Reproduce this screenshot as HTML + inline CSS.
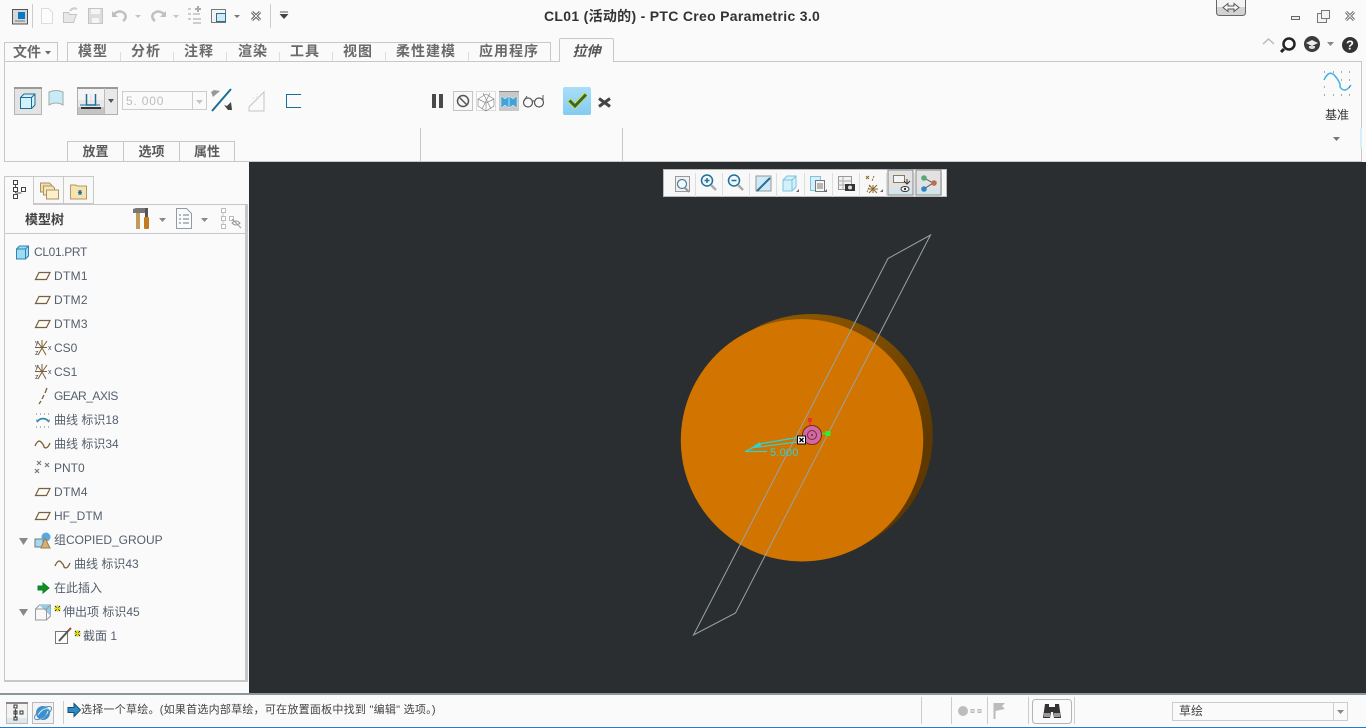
<!DOCTYPE html>
<html><head><meta charset="utf-8"><style>
html,body{margin:0;padding:0;background:#fafafa}
#p{position:relative;width:1366px;height:728px;overflow:hidden;background:#fafafa;font-family:"Liberation Sans","Noto Sans CJK SC",sans-serif;color:#4a4a4a}
.a{position:absolute}
.tab{position:absolute;top:42px;height:19px;line-height:19px;font-size:14px;letter-spacing:1px;font-weight:bold;color:#6a6a6a;text-align:center;white-space:nowrap}
.sub{position:absolute;top:142px;height:19px;line-height:19px;font-size:13px;font-weight:bold;color:#5a5a5a;text-align:center;white-space:nowrap}
.sep{position:absolute;background:#c8c8c8}
.row{position:absolute;font-size:12px;line-height:16px;color:#55606c;white-space:nowrap}
svg{position:absolute;overflow:visible}
</style></head><body><div id="p">

<!-- quick access toolbar -->
<svg style="left:0;top:0" width="300" height="36" fill="none">
<rect x="12.500" y="9.500" width="15" height="14.500" fill="#d8d8d8" stroke="#555"/><rect x="18" y="12" width="7" height="7" fill="#0a78c8"/><path d="M15 21h10" stroke="#777"/>
<line x1="32.500" y1="4" x2="32.500" y2="28" stroke="#ccc"/>
<path d="M41.500 8.500h7l4 4v11h-11z" stroke="#ddd" fill="#fdfdfd"/>
<path d="M63.500 22.500v-10h5l1 2h7l-3 8z" stroke="#c4c4c4" fill="#e8e8e8"/><path d="M70 11q3-4 7-2" stroke="#ccc" stroke-width="2"/>
<path d="M88.500 8.500h14v15h-14z" stroke="#c4c4c4" fill="#ddd"/><rect x="91" y="9" width="9" height="5" fill="#f5f5f5"/><rect x="92" y="18" width="7" height="5" fill="#f5f5f5"/>
<path d="M114 14q6-5 11 0q2 4-2 7" stroke="#c0c0c0" stroke-width="2.500"/><path d="M112 11v6h6z" fill="#c0c0c0"/>
<path d="M135 15h6l-3 3z" fill="#c4c4c4"/>
<path d="M164 14q-6-5-11 0q-2 4 2 7" stroke="#c0c0c0" stroke-width="2.500"/><path d="M166 11v6h-6z" fill="#c0c0c0"/>
<path d="M173 15h6l-3 3z" fill="#c4c4c4"/>
<path d="M188 9h3M188 14h3M188 19h3M193 14h7M193 19h8M193 23h8" stroke="#c0c0c0" stroke-width="1.500"/><path d="M195 9h6M198 6v6" stroke="#aaa" stroke-width="2"/>
<rect x="211.500" y="9.500" width="14" height="13" fill="#f4f4f4" stroke="#777"/><rect x="216.500" y="13.500" width="9" height="8" fill="#cfe9f5" stroke="#2a6f96"/>
<path d="M234 15h6l-3 3z" fill="#777"/>
<path d="M252 12l8 8M260 12l-8 8" stroke="#555" stroke-width="3"/><path d="M252 12l8 8M260 12l-8 8" stroke="#eee" stroke-width="1"/>
<line x1="270.500" y1="4" x2="270.500" y2="28" stroke="#ccc"/>
<path d="M280 12h8" stroke="#555"/><path d="M279.500 14h9l-4.500 5z" fill="#444"/>
</svg>
<div class="a" style="left:544px;top:8px;font-size:14px;letter-spacing:.3px;line-height:17px;font-weight:bold;color:#333;white-space:nowrap">CL01 (活动的) - PTC Creo Parametric 3.0</div>

<!-- window controls -->
<svg style="left:1200px;top:0" width="166" height="60" fill="none">
<path d="M16.500 0v12q0 3.500 3 3.500h23q3 0 3-3.500V0" fill="#d2d2d2" stroke="#666"/><rect x="17" y="0" width="28" height="7" fill="#f4f4f4"/>
<path d="M23 7.500l5-4v2.500h6v-2.500l5 4-5 4v-2.500h-6v2.500z" fill="#f8f8f8" stroke="#555"/>
<rect x="91.500" y="16.500" width="8" height="3" stroke="#666" fill="#eee"/>
<rect x="117.500" y="13.500" width="9" height="9" stroke="#777" fill="#f3f3f3"/><rect x="121.500" y="10.500" width="8" height="8" stroke="#777" fill="#f3f3f3"/>
<path d="M146 12l8 8M154 12l-8 8" stroke="#666" stroke-width="3"/><path d="M146 12l8 8M154 12l-8 8" stroke="#eee" stroke-width="1"/>
<path d="M63 44l5.500-5 5.500 5" stroke="#bbb" stroke-width="1.500"/>
<circle cx="89" cy="44" r="5.500" stroke="#222" stroke-width="2.500"/><path d="M84 49l-3 3" stroke="#222" stroke-width="3"/>
<circle cx="112" cy="44" r="8" fill="#3c3c3c"/><path d="M106 43l6-3 6 3-6 3z" fill="#eee"/><path d="M109 46v2q3 2 6 0v-2" fill="#ddd"/>
<path d="M127 42h7l-3.500 4z" fill="#888"/>
<circle cx="150" cy="45" r="8" fill="#333"/><text x="150" y="49.500" font-size="13" font-weight="bold" fill="#fff" text-anchor="middle" font-family="Liberation Sans">?</text>
</svg>

<!-- Tabs -->
<div class="a" style="left:4px;top:42px;width:54px;height:19px;border:1px solid #c8c8c8;border-bottom:0;box-sizing:border-box"></div>
<div class="a" style="left:67px;top:42px;width:484px;height:19px;border:1px solid #c8c8c8;border-bottom:0;box-sizing:border-box"></div>
<div class="a" style="left:13px;top:43px;font-size:14px;line-height:18px;font-weight:bold;color:#6a6a6a;white-space:nowrap">文件</div>
<svg style="left:45px;top:51px" width="6" height="4"><path d="M0 0h6l-3 3.500z" fill="#666"/></svg>
<div class="tab" style="left:77px;width:32px">模型</div>
<div class="tab" style="left:130px;width:32px">分析</div>
<div class="tab" style="left:183px;width:32px">注释</div>
<div class="tab" style="left:237px;width:32px">渲染</div>
<div class="tab" style="left:289px;width:32px">工具</div>
<div class="tab" style="left:342px;width:32px">视图</div>
<div class="tab" style="left:395px;width:62px">柔性建模</div>
<div class="tab" style="left:478px;width:62px">应用程序</div>
<div class="sep" style="left:120px;top:52px;width:1px;height:9px;background:#ddd"></div>
<div class="sep" style="left:173px;top:52px;width:1px;height:9px;background:#ddd"></div>
<div class="sep" style="left:226px;top:52px;width:1px;height:9px;background:#ddd"></div>
<div class="sep" style="left:279px;top:52px;width:1px;height:9px;background:#ddd"></div>
<div class="sep" style="left:332px;top:52px;width:1px;height:9px;background:#ddd"></div>
<div class="sep" style="left:385px;top:52px;width:1px;height:9px;background:#ddd"></div>
<div class="sep" style="left:468px;top:52px;width:1px;height:9px;background:#ddd"></div>
<!-- ribbon frame -->
<div class="a" style="left:4px;top:61px;width:1358px;height:101px;border:1px solid #c8c8c8;box-sizing:border-box;background:#fafafa"></div>
<div class="a" style="left:559px;top:38px;width:55px;height:24px;border:1px solid #c8c8c8;border-bottom:0;box-sizing:border-box;background:#fafafa;border-radius:2px 2px 0 0;text-align:center;font-size:14px;line-height:24px;font-weight:bold;font-style:italic;color:#555">拉伸</div>

<!-- ribbon left icons -->
<svg style="left:0;top:80px" width="320" height="40" fill="none">
<rect x="14.500" y="7.500" width="27" height="27" fill="#e3e3e3" stroke="#b5b5b5"/><rect x="14" y="7" width="28" height="2" fill="#9a9a9a"/>
<path d="M20.500 17.500l3.500-3.500h11v11l-3.500 3.500h-11z" fill="#d3f0fb" stroke="#1b6f94"/><path d="M20.500 17.500h11v11M31.500 17.500l3.500-3.500" stroke="#1b6f94"/>
<path d="M49 12q7-3 14 0v13q-7-4-14 0z" fill="#c6ecf8" stroke="#a7a7a7"/>
<rect x="77.500" y="7.500" width="40" height="27" fill="#e8e8e8" stroke="#b0b0b0"/><rect x="77" y="7" width="41" height="2" fill="#999"/>
<rect x="78" y="9" width="26" height="11" fill="#f4f4f4"/><rect x="78" y="27" width="26" height="7" fill="#c4c4c4"/>
<line x1="104.500" y1="8" x2="104.500" y2="34" stroke="#bbb"/>
<path d="M80 25h20" stroke="#1b6f94"/><path d="M86.500 14v11h9V14" stroke="#1b6f94" stroke-width="1.500"/><path d="M91 14v8" stroke="#ddd"/><path d="M81 28h20" stroke="#333" stroke-width="2"/>
<path d="M108 19h6l-3 4z" fill="#555"/>
<rect x="122.500" y="11.500" width="84" height="18" fill="#fafafa" stroke="#ccc"/><line x1="192.500" y1="12" x2="192.500" y2="29" stroke="#ccc"/>
<path d="M196 20h7l-3.500 4z" fill="#c4c4c4"/>
<text x="126" y="25" font-size="12" fill="#bdbdbd" font-family="Liberation Sans" letter-spacing="0.800">5. 000</text>
<path d="M212 31l19-22" stroke="#1b6f94" stroke-width="2"/><path d="M211 12l3-2 6 1-7 6z" fill="#999"/><path d="M232 30l-1-8-4 4-3-1 4 5z" fill="#444"/>
<path d="M249 27l15-15v19h-15z" stroke="#c4c4c4"/><path d="M252 18h8M257 14v6" stroke="#ddd" stroke-dasharray="1 1"/>
<path d="M301 14.500h-14.500v13H301" stroke="#1b6f94"/>
</svg>

<svg style="left:420px;top:85px" width="200" height="34" fill="none">
<defs><linearGradient id="okg" x1="0" y1="0" x2="0" y2="1"><stop offset="0" stop-color="#a9def9"/><stop offset="1" stop-color="#83cbf2"/></linearGradient></defs>
<rect x="12" y="9" width="4" height="14" fill="#4a4a4a"/><rect x="19" y="9" width="4" height="14" fill="#4a4a4a"/>
<rect x="33.500" y="6.500" width="19" height="19" fill="#f8f8f8" stroke="#c4c4c4"/><circle cx="43" cy="16" r="5.500" stroke="#555" stroke-width="1.500"/><path d="M39 12l8 8" stroke="#555" stroke-width="1.500"/>
<rect x="56.500" y="6.500" width="19" height="19" fill="#fdfdfd" stroke="#ddd"/><path d="M58 14l8-5 8 5v7l-8 5-8-5zM58 14l8 4 8-4M66 18v8M63 8l8 16M70 8l-8 16" stroke="#888" stroke-width="0.700"/>
<rect x="79" y="6" width="20" height="20" fill="#c8c8c8"/><rect x="79" y="6" width="20" height="1" fill="#888"/><path d="M81 11l4 3 4-3v12l-4-3-4 3zM89 11l4 3 4-3v12l-4-3-4 3z" fill="#3ea3d8" stroke="#eee" stroke-width="0.500"/>
<circle cx="108" cy="17.500" r="4.500" stroke="#555" stroke-width="1.200"/><circle cx="119" cy="17.500" r="4.500" stroke="#555" stroke-width="1.200"/><path d="M112 16h3M104 16l3-5M123 16v-6" stroke="#555"/>
<rect x="143" y="2" width="28" height="28" rx="2" fill="url(#okg)"/>
<path d="M149 15l6 6 11-12" stroke="#d8d84a" stroke-width="5"/><path d="M149.500 15.500l5.500 5.500 11-11.500" stroke="#2f6a34" stroke-width="3"/>
<path d="M179 13.500l11 8M190 13.500l-11 8" stroke="#444" stroke-width="3"/>
</svg>
<div class="sep" style="left:420px;top:128px;width:1px;height:33px"></div>
<div class="sep" style="left:622px;top:128px;width:1px;height:33px"></div>

<!-- sub tabs -->
<div class="a" style="left:67px;top:141px;width:168px;height:20px;border:1px solid #c8c8c8;border-bottom:0;box-sizing:border-box"></div>
<div class="sep" style="left:123px;top:141px;width:1px;height:20px"></div>
<div class="sep" style="left:179px;top:141px;width:1px;height:20px"></div>
<div class="sub" style="left:68px;width:55px">放置</div>
<div class="sub" style="left:124px;width:55px">选项</div>
<div class="sub" style="left:180px;width:54px">属性</div>

<!-- datum -->
<svg style="left:1320px;top:68px" width="36" height="34" fill="none">
<path d="M4 12q5-11 11-4t5 11q5 7 11-2" stroke="#3fb4e0" stroke-width="1.500"/>
<path d="M4 4h1M13 4h1M21 4h1M29 4h1M4 19h1M4 27h1M13 27h1M21 27h1M29 27h1M21 12h1M29 12h1M29 19h1" stroke="#555"/>
</svg>
<div class="a" style="left:1325px;top:107px;font-size:12px;line-height:17px;color:#333;white-space:nowrap">基准</div>
<svg style="left:1333px;top:137px" width="8" height="5"><path d="M0 0h7l-3.500 4z" fill="#777"/></svg>
<div class="a" style="left:1360px;top:128px;width:2px;height:20px;background:#d6eef7"></div>

<!-- Viewport -->
<div class="a" style="left:249px;top:162px;width:1117px;height:531px;background:#2a2e30"></div>
<div class="a" style="left:0;top:162px;width:249px;height:531px;background:#fafafa"></div>

<svg style="left:0;top:0" width="1366" height="728" fill="none">
<defs><linearGradient id="bk" x1="0.400" y1="0" x2="1" y2="0.500"><stop offset="0" stop-color="#8c5800"/><stop offset="0.500" stop-color="#7a4a00"/><stop offset="1" stop-color="#5e3800"/></linearGradient></defs>
<circle cx="811.700" cy="435" r="121" fill="url(#bk)"/>
<circle cx="802" cy="440.300" r="121.200" fill="#d17400"/>
<path d="M888 258.500L930.500 235L735.500 613L693.500 635Z" stroke="#9aa2a6" stroke-width="1"/>
<path d="M745 451.500L762 443.500L797 437.500M751 448L797 442M745 451.500H767" stroke="#2fd3d6" stroke-width="1.200"/>
<path d="M752 447l8-5 1 4z" fill="#2fd3d6"/>
<text x="770" y="456" font-size="11" fill="#2fd3d6" font-family="Liberation Sans" letter-spacing="0.200">5.000</text>
<circle cx="812" cy="435" r="9.500" fill="#cf6aa6" stroke="#7d2a10" stroke-width="1"/>
<circle cx="812" cy="435" r="4.500" stroke="#7d2a30" stroke-width="1"/><circle cx="812" cy="435" r="1" fill="#7d2a30"/>
<path d="M810 418v7" stroke="#f03030" stroke-width="1.500"/><rect x="808" y="418" width="4" height="4" fill="#f03030"/>
<path d="M822 433.500h5" stroke="#30ee30" stroke-width="1.500"/><rect x="825.500" y="431" width="5" height="5" fill="#30ee30"/>
<rect x="797.500" y="436" width="8" height="8" fill="#fff" stroke="#000"/><path d="M799.500 438l4 4M803.500 438l-4 4" stroke="#000" stroke-width="1.400"/>
</svg>

<!-- view toolbar -->
<div class="a" style="left:663px;top:169px;width:284px;height:28px;background:#f8f8f8;border:1px solid #bbb;box-sizing:border-box"></div>
<svg style="left:660px;top:165px" width="290" height="35" fill="none">
<path d="M35.500 8v24M62.500 8v24M89.500 8v24M116.500 8v24M144.500 8v24M172.500 8v24M199.500 8v24M226.500 8v24M254.500 8v24M281.500 8v24" stroke="#ddd"/>
<rect x="15.500" y="11.500" width="14" height="15" fill="#f0f0f0" stroke="#999"/><circle cx="22" cy="19" r="4.500" fill="#f5fbff" stroke="#4a7f9a" stroke-width="1.200"/><path d="M25 23l4 4" stroke="#999" stroke-width="2"/>
<circle cx="47" cy="15.500" r="5.500" fill="#f0f8ff" stroke="#1f6f98" stroke-width="1.500"/><path d="M44.500 15.500h5M47 13v5" stroke="#1f6f98" stroke-width="1.500"/><path d="M51 20l5 5" stroke="#aaa" stroke-width="2.500"/>
<circle cx="74" cy="15.500" r="5.500" fill="#f0f8ff" stroke="#1f6f98" stroke-width="1.500"/><path d="M71.500 15.500h5" stroke="#1f6f98" stroke-width="1.500"/><path d="M78 20l5 5" stroke="#aaa" stroke-width="2.500"/>
<rect x="96" y="11" width="15" height="15" fill="#cfe9f6" stroke="#999"/><path d="M97 26l13-13" stroke="#1f6f98" stroke-width="2"/>
<path d="M123 15l4-4h9v11l-4 4h-9z" fill="#d3f0fb" stroke="#7cc3de"/><path d="M123 15h9v11M132 15l4-4" stroke="#7cc3de"/><path d="M139 24v3h-3z" fill="#666"/>
<rect x="150.500" y="11.500" width="10" height="14" fill="#d3f0fb" stroke="#7cc3de"/><rect x="155.500" y="15.500" width="9" height="11" fill="#f5f5f5" stroke="#777"/><path d="M157 19h6M157 21h6M157 23h6" stroke="#777"/><path d="M167 24v3h-3z" fill="#666"/>
<rect x="178.500" y="11.500" width="13" height="13" fill="#f2f2f2" stroke="#999"/><path d="M178 16h13M178 20h13M183 12v12" stroke="#aaa"/><rect x="185" y="19" width="10" height="7" fill="#333"/><circle cx="190" cy="22.500" r="2" fill="#ddd"/>
<path d="M206 11l3 3M209 11l-3 3M213 20v8M208 24h10M209 20l8 8M217 20l-8 8" stroke="#8a6a2a"/><path d="M214 11l-2 5M210 20l-3 7" stroke="#8a6a2a" stroke-dasharray="2 1"/><path d="M223 24v3h-3z" fill="#666"/>
<rect x="228" y="5" width="25" height="25" fill="#e2e2e2" stroke="#888"/><rect x="229" y="24" width="23" height="5" fill="#d2e5ec"/>
<rect x="233.500" y="10.500" width="11" height="7" fill="#f4f4f4" stroke="#8a7a5a"/><path d="M247 14v5M244 16l3 3 3-3" stroke="#333"/><ellipse cx="245" cy="24" rx="4" ry="2.500" fill="#fff" stroke="#333"/><circle cx="245" cy="24" r="1.200" fill="#333"/>
<rect x="256" y="5" width="25" height="25" fill="#e2e2e2" stroke="#888"/><rect x="257" y="24" width="23" height="5" fill="#d2e5ec"/>
<path d="M264 13l9 5-9 6" stroke="#555"/><circle cx="264" cy="13" r="2.800" fill="#58a878"/><circle cx="274" cy="18" r="2.800" fill="#c06a50"/><circle cx="264" cy="24" r="2.800" fill="#2f86c6"/>
</svg>

<!-- Left panel -->
<div class="a" style="left:4px;top:204px;width:244px;height:478px;border:1px solid #c8c8c8;border-right:3px solid #c8c8c8;border-bottom:2px solid #c8c8c8;box-sizing:border-box;background:#fafafa"></div>
<div class="a" style="left:4px;top:176px;width:30px;height:29px;border:1px solid #c8c8c8;border-bottom:0;box-sizing:border-box;background:#fafafa"></div>
<div class="a" style="left:34px;top:176px;width:30px;height:28px;border:1px solid #c8c8c8;border-left:0;box-sizing:border-box;background:#f8f8f8"></div>
<div class="a" style="left:64px;top:176px;width:30px;height:28px;border:1px solid #c8c8c8;border-left:0;box-sizing:border-box;background:#f8f8f8"></div>
<svg style="left:0;top:170px" width="250" height="65" fill="none">
<path d="M15.500 13v10M15.500 23h6" stroke="#555"/><rect x="13.500" y="10.500" width="4" height="4" fill="#fff" stroke="#444"/><rect x="13.500" y="17.500" width="4" height="4" fill="#fff" stroke="#444"/><rect x="13.500" y="24.500" width="4" height="4" fill="#fff" stroke="#444"/><rect x="21.500" y="17.500" width="4" height="4" fill="#fff" stroke="#444"/>
<path d="M40.500 22V13h9l2 2v7z" fill="#f4dca6" stroke="#a89468"/><path d="M43.500 25V16h9l2 2v7z" fill="#f8e6b8" stroke="#a89468"/><path d="M46.500 29V20h12v9z" fill="#fbeec8" stroke="#a89468"/>
<path d="M70.500 29V15h5l2 1h9v13z" fill="#f6e3b0" stroke="#b09a68"/><path d="M78 22.500h4M80 20v5M78.500 20.500l3 4M81.500 20.500l-3 4" stroke="#1f6f98"/>
<g transform="translate(0,29)">
<path d="M133 10l3-1h11l-1 5h-13z" fill="#777"/><rect x="136" y="14" width="4" height="16" fill="#c49a5a"/><rect x="145" y="9" width="3" height="9" fill="#555"/><rect x="144" y="18" width="5" height="12" rx="1" fill="#c47a20"/>
<path d="M159 19h7l-3.500 4z" fill="#888"/>
<path d="M176.500 9.500h10l5 5v15h-15z" fill="#f6fbfd" stroke="#999"/><path d="M179 16h2M179 20h2M179 24h2M183 16h6M183 20h6M183 24h6" stroke="#777"/>
<path d="M201 19h7l-3.500 4z" fill="#888"/>
<path d="M223 12v13" stroke="#ccc"/><rect x="221.500" y="9.500" width="4" height="4" fill="#fff" stroke="#bbb"/><rect x="221.500" y="17.500" width="4" height="4" fill="#fff" stroke="#bbb"/><rect x="221.500" y="25.500" width="4" height="4" fill="#fff" stroke="#bbb"/><rect x="229.500" y="17.500" width="4" height="4" fill="#fff" stroke="#bbb"/>
<path d="M232 24q4-4 8 0q-4 4-8 0zM232 20l9 9" stroke="#999"/>
</g>
</svg>
<div class="a" style="left:25px;top:211px;font-size:13px;line-height:17px;font-weight:bold;color:#444;white-space:nowrap">模型树</div>
<div class="a" style="left:5px;top:233px;width:241px;height:1px;background:#c8c8c8"></div>

<!-- tree icons (origin y=240) -->
<svg style="left:0;top:240px" width="150" height="410" fill="none">
<path d="M16.500 9l3-3h9v10l-3 3h-9z" fill="#9fdcf4" stroke="#2d86ad"/><path d="M16.500 9h9v10M25.500 9l3-3" stroke="#2d86ad"/>
<g stroke="#7b5f35" stroke-width="1.200">
<path d="M35.500 39.500l3.500-7h11l-3.500 7z"/>
<path d="M35.500 63.500l3.500-7h11l-3.500 7z"/>
<path d="M35.500 87.500l3.500-7h11l-3.500 7z"/>
<path d="M35.500 255.500l3.500-7h11l-3.500 7z"/>
<path d="M35.500 279.500l3.500-7h11l-3.500 7z"/>
</g>
<g stroke="#7b5f35" stroke-width="1">
<path d="M35 107.500h12M42 100v8M37 101l5 7M47 101l-5 7M42 108l-4 7M42 108l4 7"/>
<path d="M35 131.500h12M42 124v8M37 125l5 7M47 125l-5 7M42 132l-4 7M42 132l4 7"/>
</g>
<g font-family="Liberation Sans" font-size="7" fill="#444"><text x="35" y="105">y</text><text x="48" y="110">x</text><text x="35" y="115">z</text><text x="35" y="129">y</text><text x="48" y="134">x</text><text x="35" y="139">z</text></g>
<path d="M47 148l-2 5M44 155l-2 4M41 161l-2 3" stroke="#7b5f35" stroke-width="1.300"/>
<path d="M37 182a7 7 0 0 1 12 0" stroke="#2d86ad" stroke-width="1.800"/><path d="M36 174h1M40 174h1M44 174h1M48 174h1M36 187h1M40 187h1M44 187h1M48 187h1M36 180h1M49 180h1" stroke="#777"/>
<path d="M35 206q3-7 6-4t3 5q3 3 6-4" stroke="#7b5f35" stroke-width="1.300"/>
<path d="M37 221l4 4M41 221l-4 4M45 223l4 4M49 223l-4 4M35 229l4 4M39 229l-4 4" stroke="#777" stroke-width="1.200"/>
<path d="M19 298h9l-4.500 7z" fill="#888"/>
<rect x="35" y="299" width="8" height="8" fill="#9fdcf4" stroke="#777"/><circle cx="46" cy="297" r="4.500" fill="#5aa8e0"/><path d="M45 298l5 10h-9z" fill="#d6b070" stroke="#9a8050"/>
<path d="M55 326q3-7 6-4t3 5q3 3 6-4" stroke="#7b5f35" stroke-width="1.300"/>
<path d="M38 346h5v-3l6 5-6 5v-3h-5z" fill="#1d8a1d" stroke="#083"/>
<path d="M19 369h9l-4.500 7z" fill="#888"/>
<path d="M35.500 369l4-4h11v11l-4 4h-11z" fill="#f8f8f8" stroke="#999"/><path d="M39.500 365h11v11z" fill="#8fcdea"/>
<path d="M35.500 369h11v11M46.500 369l4-4" stroke="#999"/>
<path d="M55 366l5 5M60 366l-5 5" stroke="#222" stroke-width="1"/><path d="M57.500 365v7M54 368.500h7" stroke="#e6e600" stroke-width="1.600"/>
<rect x="55.500" y="391.500" width="12" height="12" fill="#fdfdfd" stroke="#777"/><path d="M59 401l10-11" stroke="#555" stroke-width="2"/><path d="M69 390l2-2" stroke="#c04040" stroke-width="2"/>
<path d="M75 391l5 5M80 391l-5 5" stroke="#222" stroke-width="1"/><path d="M77.500 390v7M74 393.500h7" stroke="#e6e600" stroke-width="1.600"/>
</svg>

<div class="row" style="left:34px;top:244px;letter-spacing:-.35px">CL01.PRT</div>
<div class="row" style="left:54px;top:268px;letter-spacing:.3px">DTM1</div>
<div class="row" style="left:54px;top:292px;letter-spacing:.3px">DTM2</div>
<div class="row" style="left:54px;top:316px;letter-spacing:.3px">DTM3</div>
<div class="row" style="left:54px;top:340px">CS0</div>
<div class="row" style="left:54px;top:364px">CS1</div>
<div class="row" style="left:54px;top:388px;letter-spacing:-.45px">GEAR_AXIS</div>
<div class="row" style="left:54px;top:412px">曲线 标识18</div>
<div class="row" style="left:54px;top:436px">曲线 标识34</div>
<div class="row" style="left:54px;top:460px">PNT0</div>
<div class="row" style="left:54px;top:484px;letter-spacing:.3px">DTM4</div>
<div class="row" style="left:54px;top:508px">HF_DTM</div>
<div class="row" style="left:54px;top:532px">组COPIED_GROUP</div>
<div class="row" style="left:74px;top:556px">曲线 标识43</div>
<div class="row" style="left:54px;top:580px">在此插入</div>
<div class="row" style="left:63px;top:604px">伸出项 标识45</div>
<div class="row" style="left:83px;top:628px">截面 1</div>

<!-- Status bar -->
<div class="a" style="left:0;top:693px;width:1366px;height:2px;background:#8c979d"></div>
<div class="a" style="left:0;top:695px;width:1366px;height:32px;background:#fafafa"></div>
<div class="a" style="left:0;top:727px;width:1366px;height:1px;background:#1a7fd0"></div>
<svg style="left:0;top:690px" width="1366" height="38" fill="none">
<rect x="6.500" y="12.500" width="21" height="21" fill="#f3f3f3" stroke="#bbb"/><rect x="6" y="12" width="22" height="2" fill="#888"/><rect x="7" y="28" width="20" height="5" fill="#dde8ee"/>
<path d="M15.500 19v9" stroke="#555"/><rect x="14" y="15" width="3" height="3" stroke="#333"/><rect x="14" y="21" width="3" height="3" stroke="#333"/><rect x="14" y="27" width="3" height="3" stroke="#333"/><rect x="20" y="21" width="3" height="3" stroke="#333"/>
<rect x="32.500" y="12.500" width="21" height="21" fill="#f3f3f3" stroke="#bbb"/><circle cx="43" cy="23" r="7" fill="#3a8fd0"/><path d="M38 25q5-8 11-6M40 29q6-1 8-8" stroke="#cfe9f6"/><ellipse cx="43" cy="23" rx="10" ry="4" transform="rotate(-35 43 23)" stroke="#5a90b0"/>
<path d="M63.500 11v23" stroke="#ccc"/>
<path d="M68 17.500h6v-4l6.500 6.500-6.500 6.500v-4h-6z" fill="#2a8cc8" stroke="#14506e"/>
<path d="M921.500 7v27M951.500 7v27M987.500 7v27M1028.500 7v27M1074.500 7v27" stroke="#ccc"/>
<circle cx="963" cy="21" r="5" fill="#bdbdbd"/><rect x="971" y="19.500" width="3" height="3" fill="#e0e0e0" stroke="#bbb"/><rect x="978" y="19.500" width="3" height="3" fill="#e0e0e0" stroke="#bbb"/>
<path d="M994.500 13v16" stroke="#bbb" stroke-width="2"/><path d="M995 13h10l-3 3 3 3-10 2z" fill="#bbb"/>
<rect x="1032.500" y="9.500" width="39" height="24" rx="3" fill="#fafafa" stroke="#b5b5b5"/>
<path d="M1045 14h4v3h6v-3h4l2 14h-7l-1-6h-2l-1 6h-7z" fill="#333"/><rect x="1044" y="23" width="6" height="4" fill="#999"/><rect x="1054" y="23" width="6" height="4" fill="#999"/>
<rect x="1172.500" y="12.500" width="175" height="18" fill="#fafafa" stroke="#ccc"/><path d="M1333.500 13v17" stroke="#ccc"/>
<path d="M1337 20h7l-3.500 4z" fill="#888"/>
</svg>
<div class="a" style="left:81px;top:702px;font-size:11px;letter-spacing:.25px;line-height:17px;color:#444;white-space:nowrap">选择一个草绘。(如果首选内部草绘，可在放置面板中找到 "编辑" 选项。)</div>
<div class="a" style="left:1179px;top:703px;font-size:12px;line-height:16px;color:#444;white-space:nowrap">草绘</div>
</div></body></html>
